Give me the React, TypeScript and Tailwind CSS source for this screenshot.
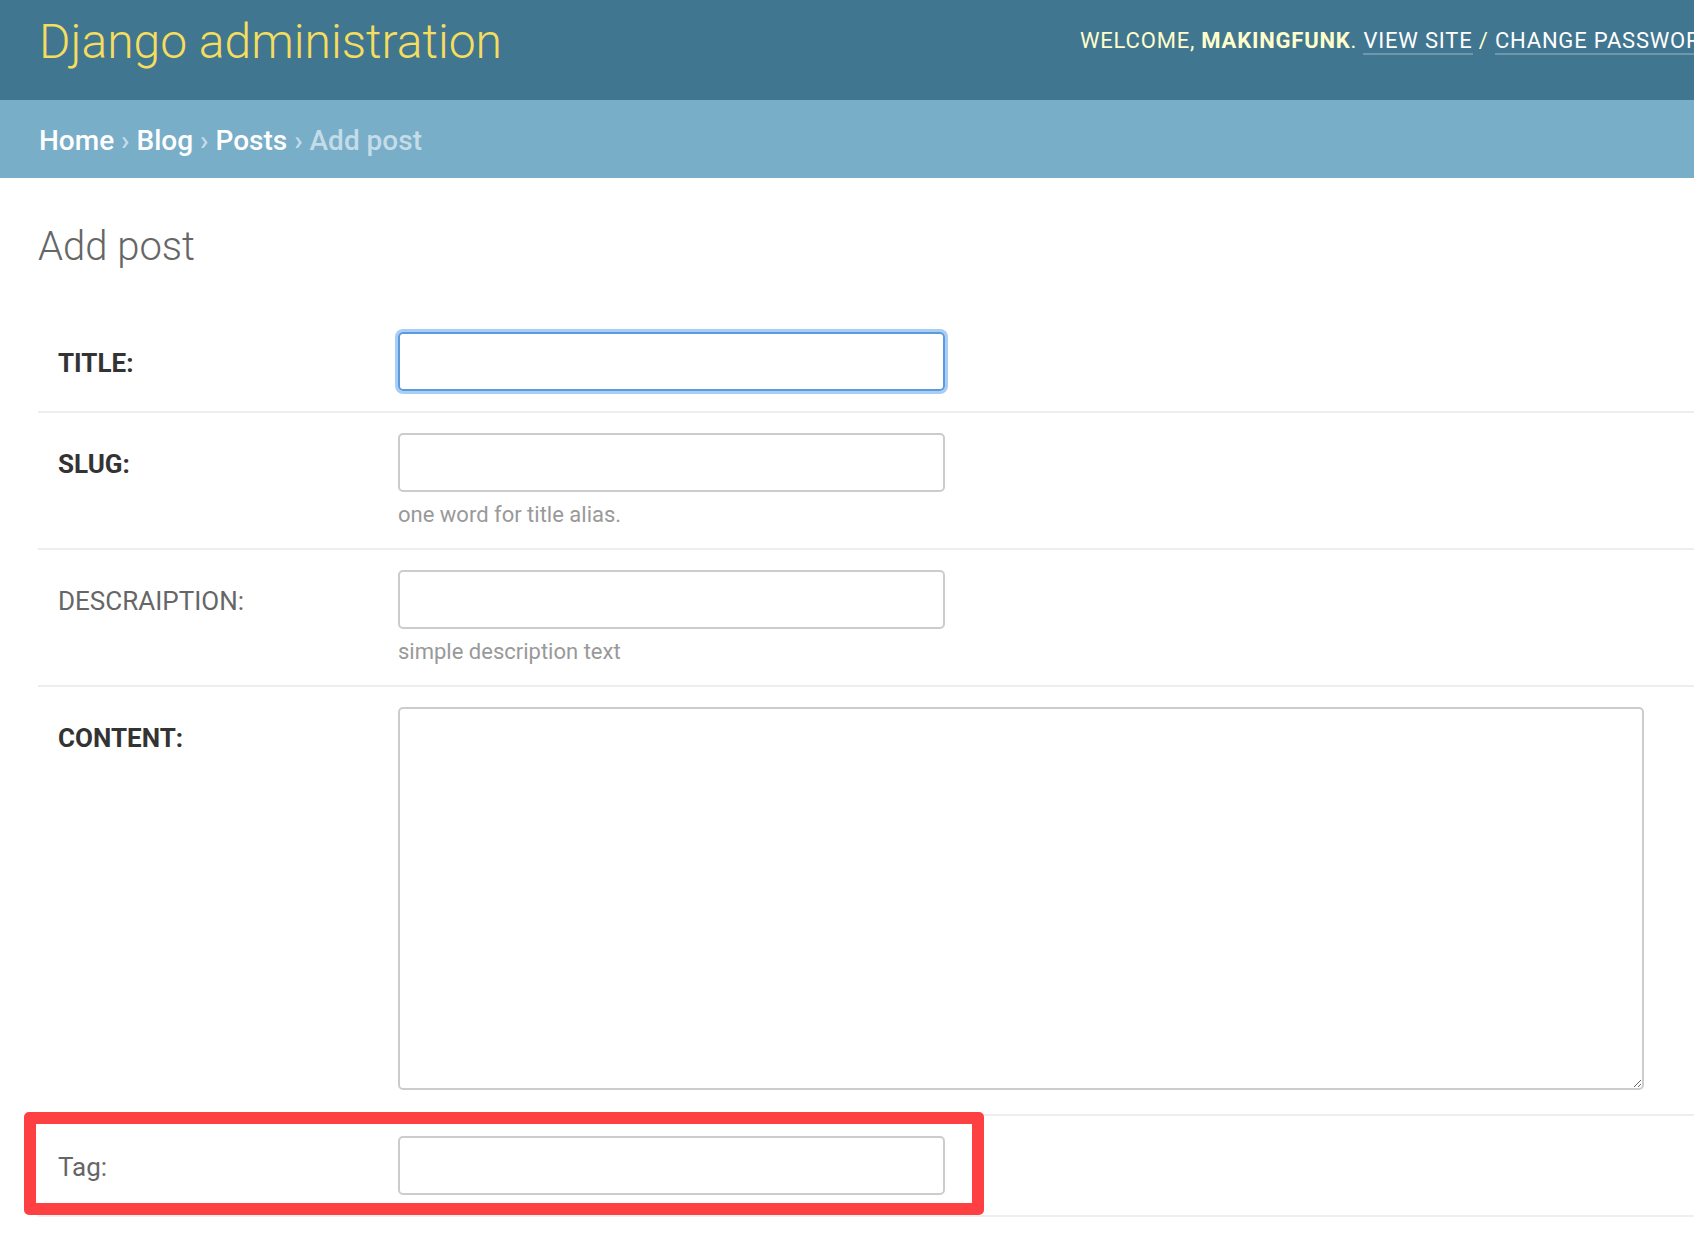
import React from "react";

const font = { fontFamily: "Roboto, 'Liberation Sans', sans-serif" };

function Row({
  label,
  required,
  help,
  children,
}: {
  label: string;
  required?: boolean;
  help?: string;
  children: React.ReactNode;
}) {
  return (
    <div className="flex border-b-2 border-[#eeeeee] py-5 pl-5">
      <label
        className={`w-[340px] shrink-0 pt-4 text-[26px] leading-[30px] ${
          required ? "font-bold text-[#333333]" : "text-[#666666]"
        }`}
      >
        {label}
      </label>
      <div className="flex flex-col">
        {children}
        {help && <p className="mt-[8px] -mb-[2px] text-[22px] leading-[30px] text-[#999999]">{help}</p>}
      </div>
    </div>
  );
}

export default function App() {
  return (
    <div className="min-h-screen bg-white" style={font}>
      {/* header */}
      <div className="flex h-[100px] overflow-hidden whitespace-nowrap bg-[#417690]">
        <div className="w-[1080px] shrink-0 pl-[39px] pt-[14px]">
          <h1 className="text-[48px] font-light leading-[56px] text-[#f5dd5d]">Django administration</h1>
        </div>
        <div className="shrink-0 pt-[26px] text-[22px] uppercase leading-[30px] tracking-[0.8px] text-[#ffffcc]">
          Welcome, <strong className="font-bold">makingfunk</strong>.{" "}
          <a className="border-b-2 border-white/25 text-white">View site</a> /{" "}
          <a className="border-b-2 border-white/25 text-white">Change password</a>
        </div>
      </div>

      {/* breadcrumbs */}
      <div className="bg-[#79aec8] px-[39px] pt-[22px] pb-[18px] text-[28px] font-medium leading-[38px] text-[#c4dce8]">
        <a className="text-white">Home</a> › <a className="text-white">Blog</a> ›{" "}
        <a className="text-white">Posts</a> › Add post
      </div>

      {/* content */}
      <div className="pl-[38px] pt-[45px]">
        <h1 className="mb-[41px] text-[40px] font-light leading-[48px] text-[#666666]">Add post</h1>

        <div className="relative">
          <Row label="TITLE:" required>
            <input className="h-[59px] w-[547px] rounded-[5px] border-2 border-[#5b9bdc] shadow-[0_0_0_3px_#a8cdf6] outline-none" />
          </Row>
          <Row label="SLUG:" required help="one word for title alias.">
            <input className="h-[59px] w-[547px] rounded-[5px] border-2 border-[#cccccc] outline-none" />
          </Row>
          <Row label="DESCRAIPTION:" help="simple description text">
            <input className="h-[59px] w-[547px] rounded-[5px] border-2 border-[#cccccc] outline-none" />
          </Row>
          <Row label="CONTENT:" required>
            <textarea className="mb-[4px] h-[383px] w-[1246px] rounded-[5px] border-2 border-[#cccccc] outline-none" />
          </Row>
          <Row label="Tag:">
            <input className="h-[59px] w-[547px] rounded-[5px] border-2 border-[#cccccc] outline-none" />
          </Row>

          {/* annotation box */}
          <div className="pointer-events-none absolute bottom-[2px] left-[-14px] h-[103px] w-[960px] rounded-[5px] border-[12px] border-[#fe4042]" />
        </div>
      </div>
    </div>
  );
}
